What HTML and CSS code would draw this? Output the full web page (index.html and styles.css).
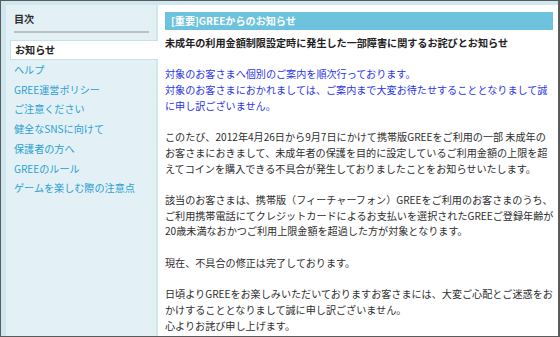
FILE: index.html
```html
<!DOCTYPE html>
<html lang="ja">
<head>
    <meta charset="UTF-8">
    <title>お知らせ</title>
    <link rel="stylesheet" href="styles.css">
</head>
<body>
    <div class="frame">
        <div class="sidebar">
            <div class="toc">
                <h3>目次</h3>
            </div>
            <div class="tab">お知らせ</div>
            <ul class="menu">
                <li><a href="#">ヘルプ</a></li>
                <li><a href="#">GREE運営ポリシー</a></li>
                <li><a href="#">ご注意ください</a></li>
                <li><a href="#">健全なSNSに向けて</a></li>
                <li><a href="#">保護者の方へ</a></li>
                <li><a href="#">GREEのルール</a></li>
                <li><a href="#">ゲームを楽しむ際の注意点</a></li>
            </ul>
        </div>

        <div class="main">
            <div class="heading">[重要]GREEからのお知らせ</div>
            <h2 class="title">未成年の利用金額制限設定時に発生した一部障害に関するお詫びとお知らせ</h2>

            <p class="notice">対象のお客さまへ個別のご案内を順次行っております。<br>対象のお客さまにおかれましては、ご案内まで大変お待たせすることとなりまして誠<br>に申し訳ございません。</p>

            <p>このたび、2012年4月26日から9月7日にかけて携帯版GREEをご利用の一部 未成年の<br>お客さまにおきまして、未成年者の保護を目的に設定しているご利用金額の上限を超<br>えてコインを購入できる不具合が発生しておりましたことをお知らせいたします。</p>

            <p>該当のお客さまは、携帯版（フィーチャーフォン）GREEをご利用のお客さまのうち、<br>ご利用携帯電話にてクレジットカードによるお支払いを選択されたGREEご登録年齢が<br>20歳未満なおかつご利用上限金額を超過した方が対象となります。</p>

            <p>現在、不具合の修正は完了しております。</p>

            <p>日頃よりGREEをお楽しみいただいておりますお客さまには、大変ご心配とご迷惑をお<br>かけすることとなりまして誠に申し訳ございません。<br>心よりお詫び申し上げます。</p>
        </div>
    </div>
</body>
</html>
```

FILE: styles.css
```css
html, body {
    margin: 0;
    padding: 0;
    height: 100%;
    overflow: hidden;
}

body {
    background-color: #5b5b5b;
    font-family: "Noto Sans CJK JP", "Noto Sans", sans-serif;
    font-size: 10.1px;
    color: #2e2e2e;
}

.frame {
    display: flex;
    margin: 1px 2px 0 1px;
    height: 335px;
    overflow: hidden;
}

/* left column */
.sidebar {
    width: 150px;
    flex-shrink: 0;
    background-color: #e3f1f6;
    border-left: 5px solid #cfe7ef;
    border-top: 4px solid #cfe7ef;
    border-right: 2px solid #cfe7ef;
}

.toc {
    padding: 7px 7px 7px 8px;
}

.toc h3 {
    margin: 0;
    font-size: 10.1px;
    font-weight: bold;
    line-height: 14px;
    padding-bottom: 5px;
    border-bottom: 2px solid #bcbfc1;
}

.tab {
    margin: 0 -2px 0 4px;
    padding: 0 4px;
    height: 18px;
    line-height: 18px;
    background-color: #fff;
    border: 1px solid #c5e3ed;
    border-right: none;
    font-weight: bold;
    color: #222;
}

.menu {
    list-style: none;
    margin: 0;
    padding: 0 0 0 8px;
}

.menu li {
    line-height: 19.7px;
}

.menu a {
    color: #2ba0d2;
    text-decoration: none;
}

/* right column */
.main {
    flex: 1;
    background-color: #fff;
    border-top: 4px solid #cfe7ef;
    border-right: 5px solid #c6e4ee;
    padding: 7px 6px 0 7px;
}

.heading {
    height: 18px;
    line-height: 18px;
    padding-left: 6px;
    background-color: #6dc3de;
    color: #fff;
    font-weight: bold;
}

.title {
    margin: 5px 0 15.7px;
    font-size: 10.1px;
    line-height: 15.7px;
    font-weight: bold;
    color: #222;
}

.main p {
    margin: 0 0 15.7px;
    line-height: 15.7px;
    white-space: nowrap;
}

.main p.notice {
    color: #2a35e6;
}
```
